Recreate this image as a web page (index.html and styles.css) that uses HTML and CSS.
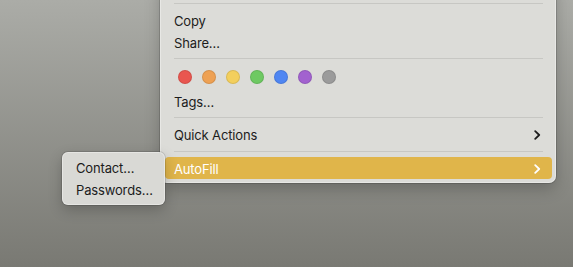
FILE: index.html
```html
<!DOCTYPE html>
<html lang="en">
<head>
    <meta charset="UTF-8">
    <title>Context Menu</title>
    <link rel="stylesheet" href="styles.css">
</head>
<body>
    <div class="menu">
        <div class="separator"></div>
        <div class="item">Copy</div>
        <div class="item">Share…</div>
        <div class="separator"></div>
        <div class="tag-row">
            <span class="dot red"></span>
            <span class="dot orange"></span>
            <span class="dot yellow"></span>
            <span class="dot green"></span>
            <span class="dot blue"></span>
            <span class="dot purple"></span>
            <span class="dot gray"></span>
        </div>
        <div class="item">Tags…</div>
        <div class="separator"></div>
        <div class="item">
            <span>Quick Actions</span>
            <svg class="chevron" viewBox="0 0 7 10" width="7" height="10"><path d="M1.2 1.2 L5.2 5 L1.2 8.8" /></svg>
        </div>
        <div class="separator last"></div>
        <div class="item active">
            <span>AutoFill</span>
            <svg class="chevron" viewBox="0 0 7 10" width="7" height="10"><path d="M1.2 1.2 L5.2 5 L1.2 8.8" /></svg>
        </div>
    </div>

    <div class="submenu">
        <div class="item">Contact…</div>
        <div class="item">Passwords…</div>
    </div>
</body>
</html>
```

FILE: styles.css
```css
body {
    margin: 0;
    width: 573px;
    height: 267px;
    overflow: hidden;
    background: linear-gradient(to bottom, #abaca7, #797973);
    font-family: Inter, "Noto Sans", sans-serif;
    font-size: 13px;
    color: #1c1c1c;
    position: relative;
}

.menu {
    margin: -20px 0 0 160px;
    width: 396px;
    padding: 18px 4px 4px 5px;
    box-sizing: border-box;
    background: #dcdcd8;
    border-radius: 7px;
    box-shadow: 0 0 0 1px rgba(0, 0, 0, 0.14), inset 0 0 0 1px rgba(255, 255, 255, 0.35), 0 6px 16px rgba(0, 0, 0, 0.22);
}

.separator {
    height: 1px;
    margin: 5px 9px;
    background: #c7c7c3;
}

.separator.last {
    margin: 6px 9px 5px;
}

.item {
    height: 22px;
    display: flex;
    align-items: center;
    justify-content: space-between;
    padding: 1px 11px 0 9px;
    box-sizing: border-box;
    border-radius: 4px;
    letter-spacing: -0.15px;
}

.item.active {
    background: #e0b54a;
    color: #fff;
}

.chevron {
    fill: none;
    stroke: #1c1c1c;
    stroke-width: 1.8;
    stroke-linecap: round;
    stroke-linejoin: round;
}

.item.active .chevron {
    stroke: #fff;
}

.tag-row {
    height: 26px;
    display: flex;
    align-items: center;
    gap: 10px;
    padding-left: 13px;
}

.dot {
    width: 14px;
    height: 14px;
    border-radius: 50%;
    box-sizing: border-box;
    border: 1px solid rgba(0, 0, 0, 0.1);
}

.red { background: #e9564f; }
.orange { background: #eea153; }
.yellow { background: #f3cf5d; }
.green { background: #6ec962; }
.blue { background: #4f86f2; }
.purple { background: #a262cf; }
.gray { background: #9b9b9b; }

.submenu {
    position: absolute;
    left: 62px;
    top: 152px;
    width: 103px;
    padding: 4px 0 5px;
    box-sizing: border-box;
    background: #d9d9d5;
    border-radius: 6px;
    box-shadow: 0 0 0 1px rgba(0, 0, 0, 0.12), inset 0 0 0 1px rgba(255, 255, 255, 0.35), 0 5px 14px rgba(0, 0, 0, 0.22);
}

.submenu .item {
    padding-left: 14px;
}
```
